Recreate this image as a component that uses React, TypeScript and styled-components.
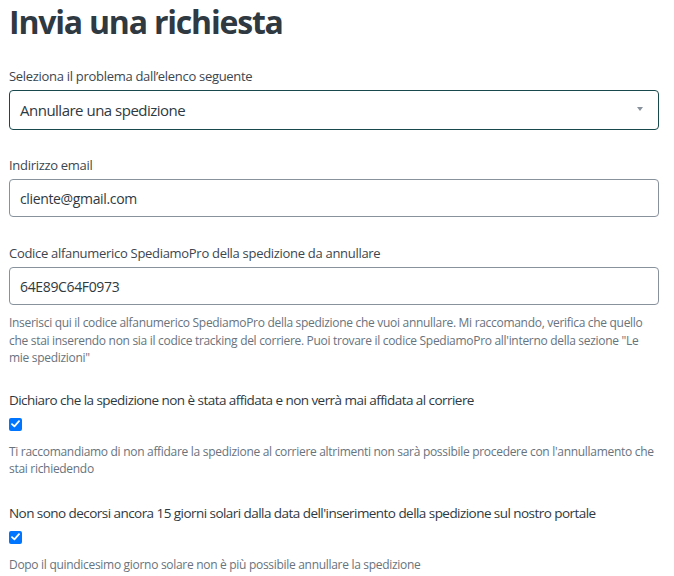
import styled, { createGlobalStyle } from 'styled-components';

const GlobalStyle = createGlobalStyle`
  body {
    margin: 0;
    background: #fff;
    font-family: "Open Sans", "Noto Sans", Arial, sans-serif;
    color: #2f3941;
  }
`;

const Page = styled.div`
  width: 650px;
  padding: 0 0 0 9px;
`;

const Title = styled.h1`
  margin: 0;
  padding-top: 2px;
  font-size: 32px;
  line-height: 40px;
  font-weight: 700;
  letter-spacing: -1.2px;
  color: #2f3941;
`;

const Form = styled.form`
  display: flex;
  flex-direction: column;
  margin-top: 24px;
`;

const Field = styled.div<{ $gap?: number }>`
  display: flex;
  flex-direction: column;
  margin-bottom: ${(p) => p.$gap ?? 26}px;
`;

const Label = styled.label<{ $strong?: boolean }>`
  font-size: ${(p) => (p.$strong ? 13.5 : 13)}px;
  line-height: 20px;
  letter-spacing: ${(p) => (p.$strong ? -0.55 : -0.3)}px;
  color: ${(p) => (p.$strong ? '#2f3941' : '#3c464f')};
  margin-bottom: ${(p) => (p.$strong ? 8 : 4)}px;
`;

const Control = styled.div<{ $focused?: boolean; $h?: number }>`
  position: relative;
  box-sizing: border-box;
  height: ${(p) => p.$h ?? 38}px;
  border: 1px solid ${(p) => (p.$focused ? '#17494d' : '#87929d')};
  border-radius: 4px;
  display: flex;
  align-items: center;
  padding: 0 10px;
  font-size: ${(p) => (p.$focused ? 15 : 14)}px;
  letter-spacing: ${(p) => (p.$focused ? -0.5 : -0.35)}px;
  color: #2f3941;
`;

const Arrow = styled.span`
  position: absolute;
  right: 15px;
  top: 16px;
  width: 0;
  height: 0;
  border-left: 3px solid transparent;
  border-right: 3px solid transparent;
  border-top: 4px solid #87929d;
`;

const Hint = styled.p<{ $top?: number }>`
  margin: ${(p) => p.$top ?? 9}px 0 0;
  font-size: 12px;
  line-height: 17.5px;
  letter-spacing: -0.3px;
  color: #68737d;
`;

const Check = styled.span`
  box-sizing: border-box;
  width: 13px;
  height: 13px;
  border-radius: 2px;
  background: #0075ff;
  display: flex;
  align-items: center;
  justify-content: center;
`;

function CheckBox() {
  return (
    <Check>
      <svg width="9" height="8" viewBox="0 0 9 8">
        <path d="M1 4.2 L3.4 6.4 L8 1.2" fill="none" stroke="#fff" strokeWidth="1.8" strokeLinecap="round" strokeLinejoin="round" />
      </svg>
    </Check>
  );
}

export default function App() {
  return (
    <>
      <GlobalStyle />
      <Page>
        <Title>Invia una richiesta</Title>
        <Form>
          <Field $gap={25}>
            <Label>Seleziona il problema dall’elenco seguente</Label>
            <Control $focused $h={40}>
              Annullare una spedizione
              <Arrow />
            </Control>
          </Field>
          <Field>
            <Label>Indirizzo email</Label>
            <Control>cliente@gmail.com</Control>
          </Field>
          <Field $gap={23}>
            <Label>Codice alfanumerico SpediamoPro della spedizione da annullare</Label>
            <Control>64E89C64F0973</Control>
            <Hint>
              Inserisci qui il codice alfanumerico SpediamoPro della spedizione che vuoi annullare. Mi raccomando, verifica che quello
              che stai inserendo non sia il codice tracking del corriere. Puoi trovare il codice SpediamoPro all'interno della sezione "Le
              mie spedizioni"
            </Hint>
          </Field>
          <Field $gap={25}>
            <Label $strong>Dichiaro che la spedizione non è stata affidata e non verrà mai affidata al corriere</Label>
            <CheckBox />
            <Hint $top={12}>
              Ti raccomandiamo di non affidare la spedizione al corriere altrimenti non sarà possibile procedere con l'annullamento che
              stai richiedendo
            </Hint>
          </Field>
          <Field $gap={0}>
            <Label $strong>Non sono decorsi ancora 15 giorni solari dalla data dell'inserimento della spedizione sul nostro portale</Label>
            <CheckBox />
            <Hint $top={12}>Dopo il quindicesimo giorno solare non è più possibile annullare la spedizione</Hint>
          </Field>
        </Form>
      </Page>
    </>
  );
}
